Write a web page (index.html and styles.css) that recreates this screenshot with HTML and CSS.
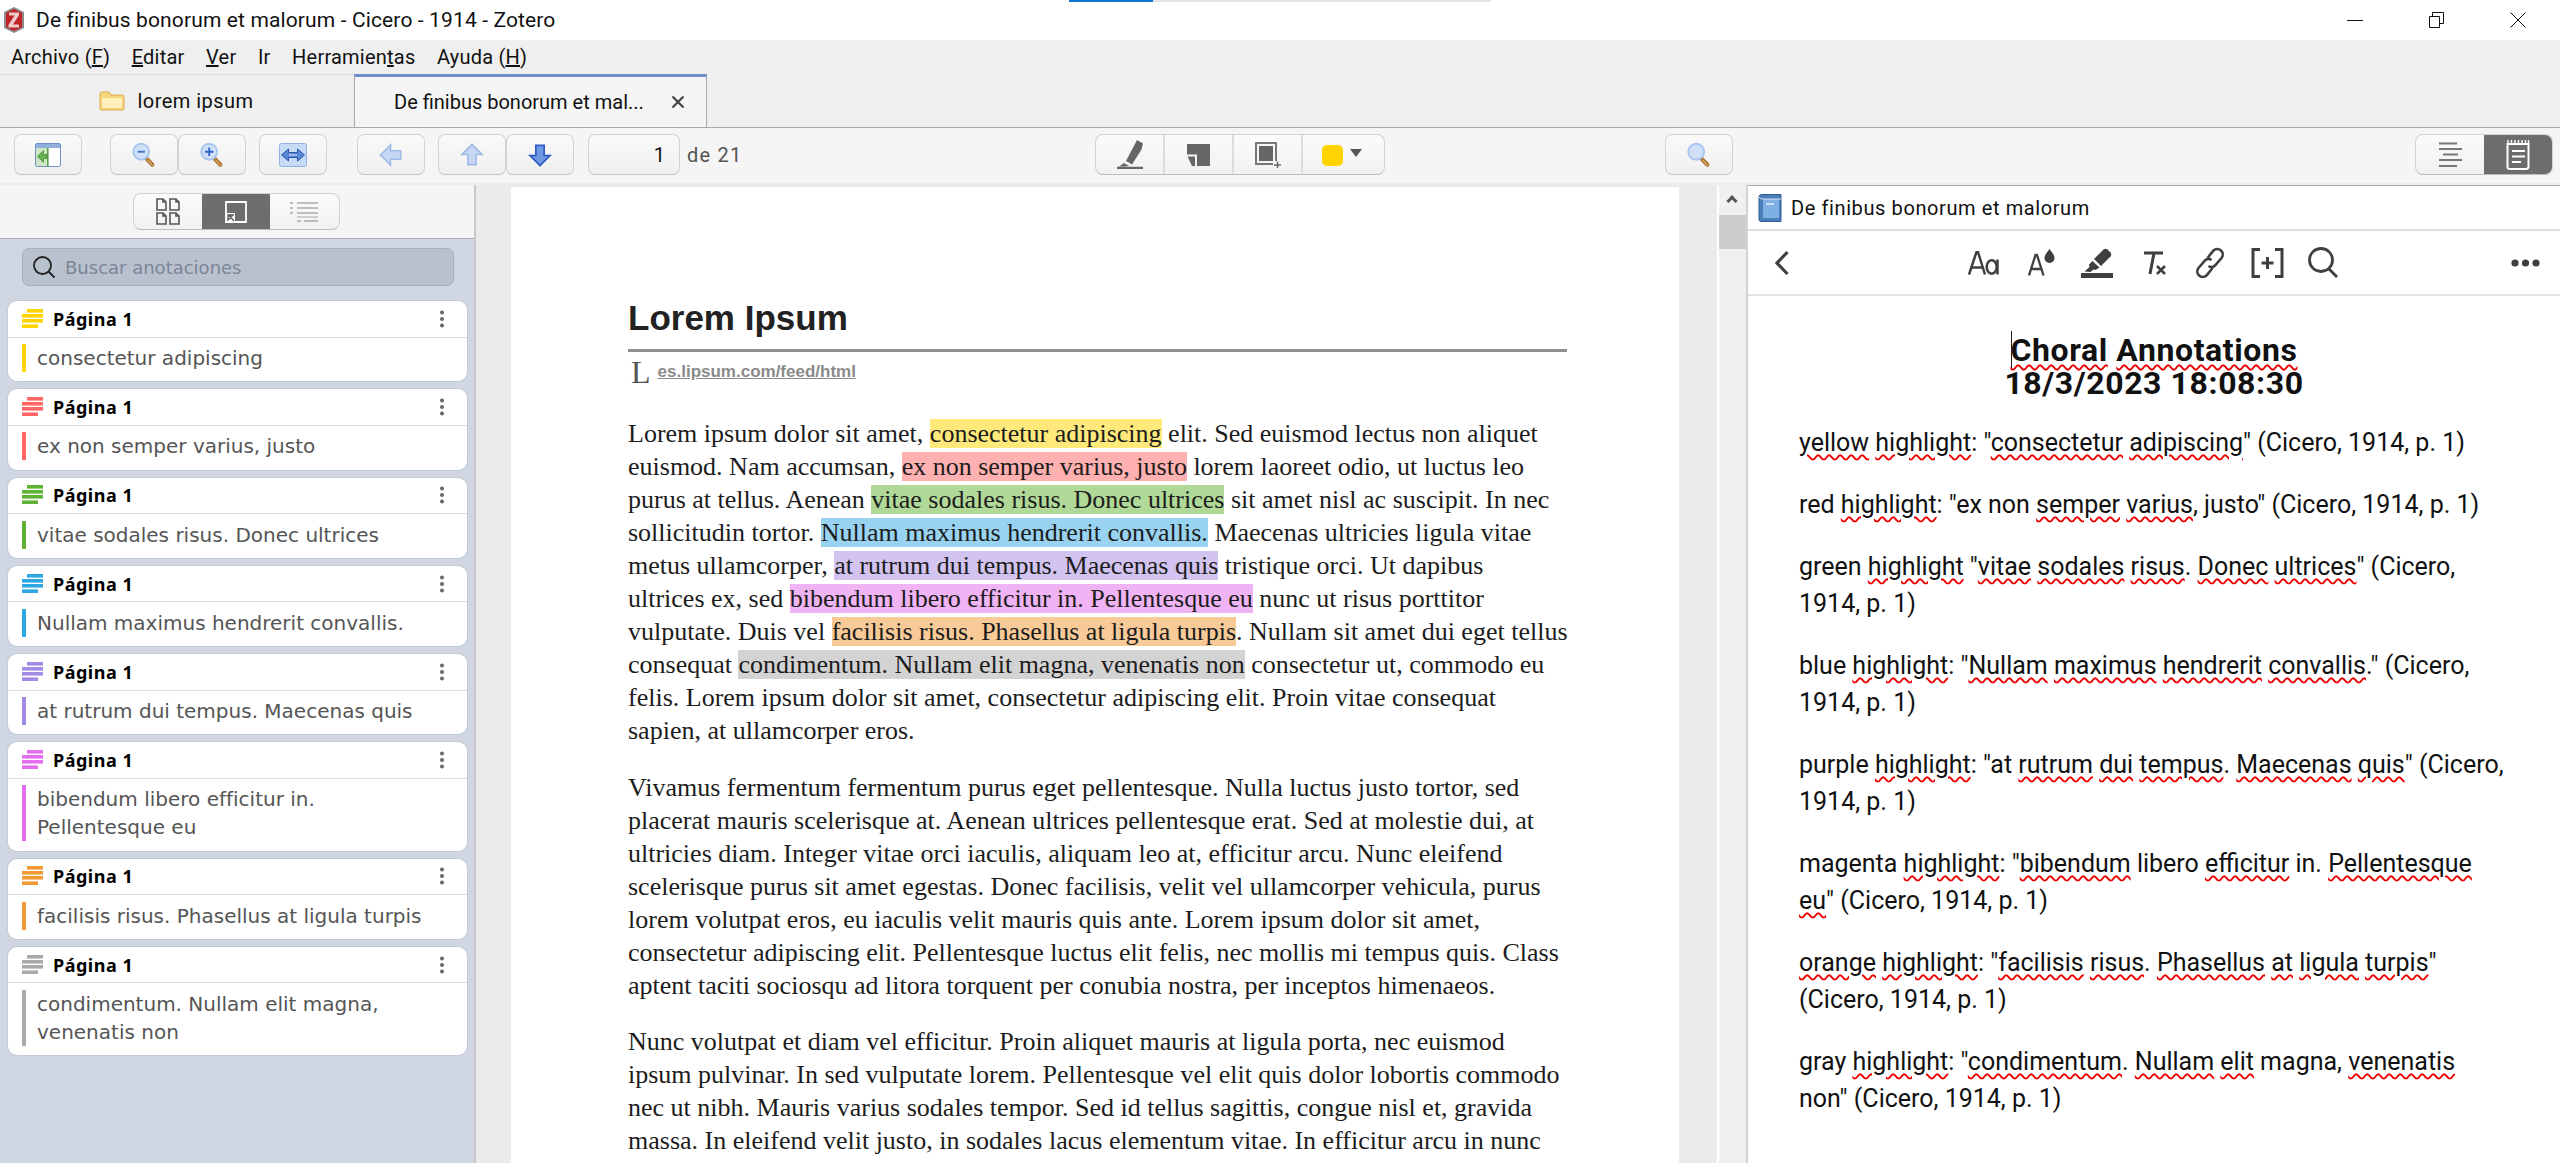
FILE: index.html
```html
<!DOCTYPE html>
<html lang="es">
<head>
<meta charset="utf-8">
<title>De finibus bonorum et malorum - Cicero - 1914 - Zotero</title>
<link rel="stylesheet" href="styles.css">
</head>
<body>
<svg class="sprite" width="0" height="0" aria-hidden="true">
  <symbol id="stripes" viewBox="0 0 21 20">
    <rect x="5" y="0" width="16" height="3.6"/><rect x="0" y="5" width="21" height="3.6"/><rect x="0" y="10" width="21" height="3.6"/><rect x="0" y="15.4" width="16" height="3.6"/>
  </symbol>
  <symbol id="dots" viewBox="0 0 6 18">
    <circle cx="3" cy="2.5" r="2"/><circle cx="3" cy="9" r="2"/><circle cx="3" cy="15.5" r="2"/>
  </symbol>
  <symbol id="mag" viewBox="0 0 28 28">
    <path d="M15.5 16.5l7.5 8" stroke="#a8712f" stroke-width="4.4" stroke-linecap="round" fill="none"/>
    <path d="M18 19.5l5 5.5" stroke="#d9a566" stroke-width="1.6" stroke-linecap="round" fill="none"/>
    <circle cx="11" cy="10.5" r="8.6" fill="#cfe0f8" stroke="#a8c5ee" stroke-width="2"/>
  </symbol>
</svg>

<header class="titlebar">
  <svg class="zlogo" width="22" height="26" viewBox="0 0 22 26"><path d="M11 0l10 5v16l-10 5-10-5V5z" fill="#8a8a8a"/><path d="M11 2l8 4v14l-8 4-8-4V6z" fill="#c02328"/><path d="M6 5.500h10v2.800L10 17.400h6V20.500H5.500v-2.800L11.500 8.500H6z" fill="#f0c9c9"/></svg>
  <span class="wintitle">De finibus bonorum et malorum - Cicero - 1914 - Zotero</span>
  <div class="progress"><span class="progress-fill"></span></div>
  <div class="winctl">
    <svg width="16" height="16" viewBox="0 0 16 16"><path d="M0 8.500h16" stroke="#111" fill="none"/></svg>
    <svg width="15" height="16" viewBox="0 0 15 16"><path d="M.5 4.500h10v11H.5zM3.500 4.500V.5h11v11h-4" stroke="#111" fill="none"/></svg>
    <svg width="16" height="16" viewBox="0 0 16 16"><path d="M.5.500l15 15M15.500.5l-15 15" stroke="#111" fill="none"/></svg>
  </div>
</header>

<nav class="menubar">
  <span>Archivo (<u>F</u>)</span><span><u>E</u>ditar</span><span><u>V</u>er</span><span>Ir</span><span>Herramien<u>t</u>as</span><span>Ayuda (<u>H</u>)</span>
</nav>

<div class="tabs">
  <div class="tab">
    <svg width="26" height="20" viewBox="0 0 26 20"><path d="M1 3q0-2 2-2h7l2 3h11q2 0 2 2v12q0 1-2 1H3q-2 0-2-1z" fill="#f5d67a" stroke="#e1a94c"/><path d="M3 7h20v10H3z" fill="#fdf0bb"/></svg>
    <span class="tab-name">lorem ipsum</span>
  </div>
  <div class="tab tab-active">
    <span>De finibus bonorum et mal...</span>
    <svg class="tab-x" width="14" height="14" viewBox="0 0 14 14"><path d="M1.500 1.500l11 11M12.500 1.500l-11 11" stroke="#444" stroke-width="2.200" fill="none"/></svg>
  </div>
</div>

<div class="toolbar">
  <div class="tb-left">
    <button class="btn" aria-label="Barra lateral"><svg width="26" height="24" viewBox="0 0 26 24"><rect x=".5" y=".5" width="25" height="23" rx="1.5" fill="#fff" stroke="#6f93c8"/><rect x="1" y="1" width="24" height="4" fill="#8fb0de"/><rect x="1" y="5" width="12" height="18" fill="#cfe6c4"/><rect x="12" y="5" width="1.6" height="18" fill="#57a247"/><path d="M2.500 13.500l6-6v4h3.500v4H8.500v4z" fill="#66b152" stroke="#3f8a34" stroke-width=".7"/></svg></button>
    <div class="grp g-zoom">
      <button class="btn" aria-label="Alejar"><svg width="26" height="26" viewBox="0 0 28 28"><use href="#mag" width="28" height="28"/><path d="M7 10.500h8" stroke="#3f72c9" stroke-width="2"/></svg></button>
      <button class="btn" aria-label="Acercar"><svg width="26" height="26" viewBox="0 0 28 28"><use href="#mag" width="28" height="28"/><path d="M6.500 10.500h9M11 6v9" stroke="#2c63c8" stroke-width="2"/></svg></button>
    </div>
    <button class="btn g-fit" aria-label="Ajustar"><svg width="28" height="24" viewBox="0 0 28 24"><rect x=".5" y=".5" width="27" height="23" rx="2" fill="#c6dbf6" stroke="#8eb2e6"/><path d="M2.500 12l7-6v3.500h9V6l7 6-7 6v-3.500h-9V18z" fill="#5a86d4" stroke="#2b53ac" stroke-width="1"/><path d="M10 12h8" stroke="#dbe8fb" stroke-width="1"/></svg></button>
    <button class="btn g-back" aria-label="Atrás"><svg width="24" height="24" viewBox="0 0 26 26"><path d="M1.500 13L12.500 2v6.500h11v9h-11V24z" fill="#c5d7f2" stroke="#9db9e6" stroke-width="1.600"/></svg></button>
    <div class="grp g-page">
      <button class="btn" aria-label="Anterior"><svg width="24" height="24" viewBox="0 0 26 26"><path d="M13 1.500L24 12.500h-6.500v11h-9v-11H2z" fill="#c5d7f2" stroke="#9db9e6" stroke-width="1.600"/></svg></button>
      <button class="btn" aria-label="Siguiente"><svg width="24" height="26" viewBox="0 0 26 26"><path d="M13 24.500L24 13.500h-6.500v-11h-9v11H2z" fill="#6f9ae2" stroke="#2e58c2" stroke-width="1.800"/></svg></button>
    </div>
    <div class="btn pageinput">1</div>
    <span class="pagecount">de 21</span>
  </div>
  <div class="seg seg-annot">
    <button class="cell" aria-label="Resaltar"><svg width="28" height="29" viewBox="0 0 28 29"><path d="M1 28h26" stroke="#666" stroke-width="2.400" fill="none"/><path d="M21 0l6 3.500-1.500 6-9.500 15-6-3.500z" fill="#666"/><path d="M8 23l5 3-4 .5-6 0z" fill="#666"/></svg></button>
    <button class="cell" aria-label="Nota"><svg width="23" height="22" viewBox="0 0 23 22"><path d="M0 0h23v22H10V10.500H0z" fill="#666"/><path d="M.5 12.500H8V22H5z" fill="#666"/></svg></button>
    <button class="cell" aria-label="Imagen"><svg width="26" height="26" viewBox="0 0 26 26"><path d="M1 1h20v21H1z" fill="none" stroke="#777" stroke-width="2"/><rect x="4" y="4" width="14" height="15" fill="#666"/><path d="M18 23h8M22 19v7" stroke="#fff" stroke-width="4"/><path d="M19 23h7M22.500 19.500v6.500" stroke="#666" stroke-width="1.600"/></svg></button>
    <button class="cell cell-color" aria-label="Color"><span class="swatch"></span><span class="caret"></span></button>
  </div>
  <button class="btn g-search" aria-label="Buscar"><svg width="26" height="26" viewBox="0 0 28 28"><use href="#mag" width="28" height="28"/></svg></button>
  <div class="seg seg-view">
    <button class="cell" aria-label="Contenido"><svg width="24" height="26" viewBox="0 0 24 26"><path d="M1 1.500h18M1 7h23M5 12.500h15M1 18h23M1 24h18" stroke="#777" stroke-width="2" fill="none"/></svg></button>
    <button class="cell cell-on" aria-label="Notas"><svg width="24" height="30" viewBox="0 0 24 30"><path d="M1.500 4h21v23q0 2-3 2H4q-2.500 0-2.500-2z" fill="none" stroke="#fff" stroke-width="2"/><path d="M2 0v4M5.500 0v4M9 0v4M12.500 0v4M16 0v4M19.500 0v4M22.500 0v4" stroke="#fff" stroke-width="1.400"/><path d="M6 11h13M6 16.500h13M6 22h9" stroke="#fff" stroke-width="2"/></svg></button>
  </div>
</div>

<main class="main">
  <aside class="sidebar">
    <div class="side-head">
      <div class="seg seg-side">
        <button class="cell" aria-label="Miniaturas"><svg width="24" height="28" viewBox="0 0 24 28"><g fill="none" stroke="#555" stroke-width="1.600"><path d="M1 1h6l3 3v8H1zM14 1h6l3 3v8h-9zM1 15h6l3 3v8H1zM14 15h6l3 3v8h-9z"/><path d="M7 1v3h3M20 1v3h3M7 15v3h3M20 15v3h3"/></g></svg></button>
        <button class="cell cell-on" aria-label="Anotaciones"><svg width="22" height="22" viewBox="0 0 22 22"><path d="M1 1h20v20H1z" fill="none" stroke="#fff" stroke-width="1.800"/><path d="M1 12h9v9H1z" fill="#fff"/><path d="M3 14h5l-5 5zM4 14.500l5 5.500" stroke="#555" stroke-width="1.300" fill="none"/></svg></button>
        <button class="cell" aria-label="Índice"><svg width="28" height="20" viewBox="0 0 28 20"><path d="M0 1h3M7 1h21M0 6h3M7 6h21M0 11h3M7 11h21M7 19h4M14 19h14" stroke="#aaa" stroke-width="1.600" fill="none"/><path d="M7 15h21" stroke="#aaa" stroke-width="1"/></svg></button>
      </div>
    </div>
    <div class="annots">
      <div class="search">
        <svg width="24" height="24" viewBox="0 0 24 24"><circle cx="10.500" cy="10.500" r="8.500" fill="none" stroke="#222" stroke-width="1.800"/><path d="M16.500 16.500l6 6" stroke="#222" stroke-width="1.800"/></svg>
        <span>Buscar anotaciones</span>
      </div>
      <article class="card yellow"><div class="card-head"><svg class="stripes" width="21" height="20"><use href="#stripes"/></svg><b>Página 1</b><svg class="dots" width="6" height="18"><use href="#dots"/></svg></div><div class="card-body"><p>consectetur adipiscing</p></div></article>
      <article class="card red"><div class="card-head"><svg class="stripes" width="21" height="20"><use href="#stripes"/></svg><b>Página 1</b><svg class="dots" width="6" height="18"><use href="#dots"/></svg></div><div class="card-body"><p>ex non semper varius, justo</p></div></article>
      <article class="card green"><div class="card-head"><svg class="stripes" width="21" height="20"><use href="#stripes"/></svg><b>Página 1</b><svg class="dots" width="6" height="18"><use href="#dots"/></svg></div><div class="card-body"><p>vitae sodales risus. Donec ultrices</p></div></article>
      <article class="card blue"><div class="card-head"><svg class="stripes" width="21" height="20"><use href="#stripes"/></svg><b>Página 1</b><svg class="dots" width="6" height="18"><use href="#dots"/></svg></div><div class="card-body"><p>Nullam maximus hendrerit convallis.</p></div></article>
      <article class="card purple"><div class="card-head"><svg class="stripes" width="21" height="20"><use href="#stripes"/></svg><b>Página 1</b><svg class="dots" width="6" height="18"><use href="#dots"/></svg></div><div class="card-body"><p>at rutrum dui tempus. Maecenas quis</p></div></article>
      <article class="card magenta"><div class="card-head"><svg class="stripes" width="21" height="20"><use href="#stripes"/></svg><b>Página 1</b><svg class="dots" width="6" height="18"><use href="#dots"/></svg></div><div class="card-body"><p>bibendum libero efficitur in.<br>Pellentesque eu</p></div></article>
      <article class="card orange"><div class="card-head"><svg class="stripes" width="21" height="20"><use href="#stripes"/></svg><b>Página 1</b><svg class="dots" width="6" height="18"><use href="#dots"/></svg></div><div class="card-body"><p>facilisis risus. Phasellus at ligula turpis</p></div></article>
      <article class="card gray"><div class="card-head"><svg class="stripes" width="21" height="20"><use href="#stripes"/></svg><b>Página 1</b><svg class="dots" width="6" height="18"><use href="#dots"/></svg></div><div class="card-body"><p>condimentum. Nullam elit magna,<br>venenatis non</p></div></article>
    </div>
  </aside>

  <section class="viewer">
    <div class="page">
      <h1>Lorem Ipsum</h1>
      <div class="source"><span class="dropl">L</span><a>es.lipsum.com/feed/html</a></div>
      <p>
        <span class="ln">Lorem ipsum dolor sit amet, <mark class="hl-yellow">consectetur adipiscing</mark> elit. Sed euismod lectus non aliquet</span>
        <span class="ln">euismod. Nam accumsan, <mark class="hl-red">ex non semper varius, justo</mark> lorem laoreet odio, ut luctus leo</span>
        <span class="ln">purus at tellus. Aenean <mark class="hl-green">vitae sodales risus. Donec ultrices</mark> sit amet nisl ac suscipit. In nec</span>
        <span class="ln">sollicitudin tortor. <mark class="hl-blue">Nullam maximus hendrerit convallis.</mark> Maecenas ultricies ligula vitae</span>
        <span class="ln">metus ullamcorper, <mark class="hl-purple">at rutrum dui tempus. Maecenas quis</mark> tristique orci. Ut dapibus</span>
        <span class="ln">ultrices ex, sed <mark class="hl-magenta">bibendum libero efficitur in. Pellentesque eu</mark> nunc ut risus porttitor</span>
        <span class="ln">vulputate. Duis vel <mark class="hl-orange">facilisis risus. Phasellus at ligula turpis</mark>. Nullam sit amet dui eget tellus</span>
        <span class="ln">consequat <mark class="hl-gray">condimentum. Nullam elit magna, venenatis non</mark> consectetur ut, commodo eu</span>
        <span class="ln">felis. Lorem ipsum dolor sit amet, consectetur adipiscing elit. Proin vitae consequat</span>
        <span class="ln">sapien, at ullamcorper eros.</span>
      </p>
      <p>
        <span class="ln">Vivamus fermentum fermentum purus eget pellentesque. Nulla luctus justo tortor, sed</span>
        <span class="ln">placerat mauris scelerisque at. Aenean ultrices pellentesque erat. Sed at molestie dui, at</span>
        <span class="ln">ultricies diam. Integer vitae orci iaculis, aliquam leo at, efficitur arcu. Nunc eleifend</span>
        <span class="ln">scelerisque purus sit amet egestas. Donec facilisis, velit vel ullamcorper vehicula, purus</span>
        <span class="ln">lorem volutpat eros, eu iaculis velit mauris quis ante. Lorem ipsum dolor sit amet,</span>
        <span class="ln">consectetur adipiscing elit. Pellentesque luctus elit felis, nec mollis mi tempus quis. Class</span>
        <span class="ln">aptent taciti sociosqu ad litora torquent per conubia nostra, per inceptos himenaeos.</span>
      </p>
      <p>
        <span class="ln">Nunc volutpat et diam vel efficitur. Proin aliquet mauris at ligula porta, nec euismod</span>
        <span class="ln">ipsum pulvinar. In sed vulputate lorem. Pellentesque vel elit quis dolor lobortis commodo</span>
        <span class="ln">nec ut nibh. Mauris varius sodales tempor. Sed id tellus sagittis, congue nisl et, gravida</span>
        <span class="ln">massa. In eleifend velit justo, in sodales lacus elementum vitae. In efficitur arcu in nunc</span>
      </p>
    </div>
  </section>

  <div class="vscroll"><span class="vs-up"></span><span class="vs-thumb"></span></div>

  <section class="notes">
    <div class="notes-head">
      <svg width="24" height="28" viewBox="0 0 24 28"><path d="M1 3q0-2.500 3-2.500h19v27H3q-2 0-2-2z" fill="#4c7db9" stroke="#2f5d96"/><path d="M5 5h16v19H5z" fill="#7fb0e3"/><path d="M1 3q1 2 4 2h18" stroke="#dbe8f7" fill="none"/><path d="M8 10h8" stroke="#e6f0fb" stroke-width="1.500"/></svg>
      <span>De finibus bonorum et malorum</span>
    </div>
    <div class="notes-tools">
      <svg class="nt-back" width="16" height="26" viewBox="0 0 16 26"><path d="M13.500 2L3 13l10.500 11" fill="none" stroke="#3f3f3f" stroke-width="3.200"/></svg>
      <svg class="nt-aa" width="31" height="24" viewBox="0 0 31 24"><path d="M1 23.500L8.500 1h1.500L17 23.500M4.200 16.500h10.600" fill="none" stroke="#3f3f3f" stroke-width="2.500"/><ellipse cx="23.700" cy="16" rx="5" ry="6.700" fill="none" stroke="#3f3f3f" stroke-width="2.500"/><path d="M29.500 8.500v15" fill="none" stroke="#3f3f3f" stroke-width="2.500"/></svg>
      <svg class="nt-ac" width="27" height="27" viewBox="0 0 27 27"><path d="M1 26.500L7.500 6H9l6.500 20.500M3.500 20h9.500" fill="none" stroke="#3f3f3f" stroke-width="2.300"/><path d="M21.500 0c-2 3-5 5.500-5 9a5 5 0 0 0 10 0c0-3.500-3-6-5-9z" fill="#3f3f3f"/></svg>
      <svg class="nt-hl" width="32" height="30" viewBox="0 0 32 30"><path d="M13 11L22.500 1.500q2-1.500 4 0l3 3q1.500 2 0 4L20 18z" fill="#3f3f3f"/><path d="M11.500 13l7 6.500-4 2.500-2-.5-3 2.500-6-.5 5-4.500-.5-2.500z" fill="#3f3f3f"/><rect x="0" y="25" width="32" height="5" fill="#3f3f3f"/></svg>
      <svg class="nt-tx" width="23" height="24" viewBox="0 0 23 24"><path d="M1 2h19M11 2L7 23" fill="none" stroke="#3f3f3f" stroke-width="3"/><path d="M14 15l8 8M22 15l-8 8" fill="none" stroke="#3f3f3f" stroke-width="2.500"/></svg>
      <svg class="nt-ln" width="32" height="32" viewBox="0 0 32 32"><path d="M13.500 11l6-7.500a5.500 5.500 0 0 1 8 7.500l-6.500 7.500a5 5 0 0 1-6.500.5M18.500 21l-6 7.500a5.500 5.500 0 0 1-8-7.500l6.500-7.500a5 5 0 0 1 6.500-.5" fill="none" stroke="#3f3f3f" stroke-width="2.600"/></svg>
      <svg class="nt-cite" width="33" height="30" viewBox="0 0 33 30"><path d="M9 1.500H2v27h7M24 1.500h7v27h-7" fill="none" stroke="#3f3f3f" stroke-width="3"/><path d="M16.500 9v12M10.500 15h12" stroke="#3f3f3f" stroke-width="3"/></svg>
      <svg class="nt-find" width="32" height="31" viewBox="0 0 32 31"><circle cx="14" cy="13" r="11.500" fill="none" stroke="#3f3f3f" stroke-width="2.800"/><path d="M22 22l8 8" stroke="#3f3f3f" stroke-width="2.800"/></svg>
      <svg class="nt-more" width="29" height="8" viewBox="0 0 29 8"><circle cx="4" cy="4" r="3.600" fill="#3f3f3f"/><circle cx="14.500" cy="4" r="3.600" fill="#3f3f3f"/><circle cx="25" cy="4" r="3.600" fill="#3f3f3f"/></svg>
    </div>
    <div class="notes-doc">
      <h2><span class="caretline"></span><span class="s">Choral</span> <span class="s">Annotations</span><br>18/3/2023 18:08:30</h2>
      <p><span class="s">yellow</span> <span class="s">highlight</span>: "<span class="s">consectetur</span> <span class="s">adipiscing</span>" (Cicero, 1914, p. 1)</p>
      <p>red <span class="s">highlight</span>: "ex non <span class="s">semper</span> <span class="s">varius</span>, justo" (Cicero, 1914, p. 1)</p>
      <p>green <span class="s">highlight</span> "<span class="s">vitae</span> <span class="s">sodales</span> <span class="s">risus</span>. <span class="s">Donec</span> <span class="s">ultrices</span>" (Cicero,<br>1914, p. 1)</p>
      <p>blue <span class="s">highlight</span>: "<span class="s">Nullam</span> <span class="s">maximus</span> <span class="s">hendrerit</span> <span class="s">convallis</span>." (Cicero,<br>1914, p. 1)</p>
      <p>purple <span class="s">highlight</span>: "at <span class="s">rutrum</span> <span class="s">dui</span> <span class="s">tempus</span>. <span class="s">Maecenas</span> <span class="s">quis</span>" (Cicero,<br>1914, p. 1)</p>
      <p>magenta <span class="s">highlight</span>: "<span class="s">bibendum</span> libero <span class="s">efficitur</span> in. <span class="s">Pellentesque</span><br><span class="s">eu</span>" (Cicero, 1914, p. 1)</p>
      <p><span class="s">orange</span> <span class="s">highlight</span>: "<span class="s">facilisis</span> <span class="s">risus</span>. <span class="s">Phasellus</span> <span class="s">at</span> <span class="s">ligula</span> <span class="s">turpis</span>"<br>(Cicero, 1914, p. 1)</p>
      <p>gray <span class="s">highlight</span>: "<span class="s">condimentum</span>. <span class="s">Nullam</span> <span class="s">elit</span> magna, <span class="s">venenatis</span><br>non" (Cicero, 1914, p. 1)</p>
    </div>
  </section>
</main>
</body>
</html>
```

FILE: styles.css
```css
* { box-sizing: border-box; }
html, body { margin: 0; height: 100%; overflow: hidden; }
body {
  display: flex; flex-direction: column;
  height: 1163px;
  font-family: Roboto, "Liberation Sans", sans-serif;
  color: #111;
  background: #fff;
}
.sprite { position: absolute; }
button { font: inherit; padding: 0; background: none; border: 0; }

/* Title bar */
.titlebar { flex: 0 0 40px; display: flex; align-items: center; padding-left: 3px; position: relative; background: #fff; }
.zlogo { flex: none; }
.wintitle { margin-left: 11px; font-size: 21px; letter-spacing: .13px; color: #111; white-space: nowrap; }
.progress { position: absolute; left: 1069px; top: 0; width: 422px; height: 2px; background: #e4e4e4; }
.progress-fill { display: block; width: 84px; height: 2px; background: #0a74d0; }
.winctl { margin-left: auto; display: flex; align-items: center; gap: 66px; padding-right: 34px; }

/* Menu */
.menubar { flex: 0 0 34px; display: flex; align-items: center; gap: 21.500px; padding-left: 11px; background: #efefef; font-size: 20px; letter-spacing: .22px; white-space: nowrap; }

/* Tabs */
.tabs { flex: 0 0 53px; display: flex; background: #efefef; border-bottom: 1px solid #aaa; }
.tab { width: 354px; height: 53px; display: flex; align-items: center; justify-content: center; gap: 13px; font-size: 20px; border-top: 1px solid #ddd; padding-right: 2px; }
.tab svg { flex: none; }
.tab-name { letter-spacing: .45px; }
.tab-active { width: 353px; background: #f5f5f5; border: 1px solid #aaa; border-top: 3px solid #6b8dc8; border-bottom: 0; justify-content: flex-start; padding-left: 39px; }
.tab-x { margin-left: 14px; }

/* Toolbar */
.toolbar { flex: 0 0 57px; display: flex; align-items: center; padding: 0 7px 2px 14px; background: #f5f5f5; border-bottom: 2px solid #ececec; }
.tb-left { width: 1081px; display: flex; align-items: center; }
.btn { width: 68px; height: 41px; display: flex; align-items: center; justify-content: center; background: linear-gradient(#f9f9f9, #f0f0f0); border: 1px solid #d2d2d2; border-bottom-color: #c4c4c4; border-radius: 7px; }
.grp { display: flex; }
.g-zoom { margin-left: 28px; }
.g-fit { margin-left: 13px; }
.g-back { margin-left: 30px; }
.g-page { margin-left: 13px; }
.pageinput { width: 92px; margin-left: 14px; justify-content: flex-end; padding-right: 14px; font-size: 20px; }
.pagecount { margin-left: 7px; font-size: 20px; color: #555; letter-spacing: 1.200px; }
.g-search { margin-left: 280px; }

.seg { display: flex; height: 41px; background: linear-gradient(#fbfbfb, #f1f1f1); border: 1px solid #d2d2d2; border-bottom-color: #bdbdbd; border-radius: 8px; overflow: hidden; }
.cell { width: 69px; display: flex; align-items: center; justify-content: center; border-right: 2px solid #dcdcdc; }
.cell:last-child { border-right: 0; }
.seg-annot { width: 290px; }
.cell-color { flex: 1; gap: 7px; padding-right: 4px; }
.swatch { width: 21px; height: 21px; margin-top: 2px; background: #ffd400; border-radius: 5px; }
.caret { width: 0; height: 0; border-left: 6.500px solid transparent; border-right: 6.500px solid transparent; border-top: 8px solid #555; margin-bottom: 4px; }
.seg-view { margin-left: auto; width: 138px; }
.seg-view .cell { flex: 1; border: 0; }
.cell-on { background: #6d6d6d; }

/* Main */
.main { flex: 1; min-height: 0; display: flex; }
.sidebar { flex: 0 0 476px; display: flex; flex-direction: column; background: #d0d7e2; border-right: 2px solid #c9c9c9; }
.side-head { flex: 0 0 54px; display: flex; justify-content: center; padding-top: 8px; background: #f5f5f5; border-bottom: 1px solid #aab; padding-right: 2px; }
.seg-side { width: 207px; height: 37px; }
.seg-side .cell { flex: 1; border: 0; }
.annots { flex: 1; display: flex; flex-direction: column; gap: 8px; padding: 9px 0 0 8px; overflow: hidden; font-family: "DejaVu Sans", sans-serif; }
.search { width: 432px; height: 38px; margin: 0 0 7px 14px; display: flex; align-items: center; gap: 9px; padding-left: 9px; background: #b9c1cf; border: 1px solid #a5afc2; border-radius: 7px; color: #7c8698; font-size: 18px; }
.card { width: 459px; background: #fff; border-radius: 9px; box-shadow: 0 0 0 1px #c3cad7; flex: none; }
.card-head { height: 36.500px; display: flex; align-items: center; padding: 0 22px 0 14px; border-bottom: 1.500px solid #dcdcdc; }
.card-head b { margin-left: 10px; font-family: "Noto Sans", sans-serif; font-size: 18px; letter-spacing: .5px; color: #000; }
.stripes { fill: currentColor; }
.dots { margin-left: auto; fill: #666; }
.card-body { padding: 6.500px 8px 9.250px 14px; }
.card-body p { margin: 0; padding-left: 11px; border-left: 4px solid currentColor; font-size: 20px; line-height: 28px; -webkit-text-fill-color: #555; }
.yellow { color: #ffd400; } .red { color: #ff6666; } .green { color: #5fb236; } .blue { color: #2ea8e5; }
.purple { color: #a28ae5; } .magenta { color: #e56eee; } .orange { color: #f19837; } .gray { color: #aaaaaa; }

/* PDF viewer */
.viewer { flex: 0 0 1241px; background: #ebebeb; padding: 2px 0 0 35px; overflow: hidden; }
.page { width: 1168px; height: 1000px; background: #fff; padding: 111px 112px 0 117px; font-family: "Liberation Serif", serif; font-size: 26px; color: #1c1c1c; }
.page h1 { margin: 0; height: 54px; border-bottom: 3px solid #909090; font: bold 35px/40px "Liberation Sans", sans-serif; color: #222; }
.source { height: 65px; display: flex; align-items: flex-start; padding-left: 3px; padding-top: 2px; }
.dropl { font-size: 32px; line-height: 36px; color: #555; margin-right: 7px; }
.source a { font: bold 17px/30px "Liberation Sans", sans-serif; color: #8a8a8a; text-decoration: underline; margin-top: 3px; }
.page p { margin: 0 0 23.500px; }
.ln { display: block; line-height: 33px; white-space: nowrap; }
mark { color: inherit; }
.hl-yellow { background: #ffe97a; } .hl-red { background: #ffb0b0; } .hl-green { background: #b0d998; } .hl-blue { background: #98d3f2; }
.hl-purple { background: #d2c3f0; } .hl-magenta { background: #f0b4f5; } .hl-orange { background: #f8ca98; } .hl-gray { background: #d3d3d3; }

/* Scrollbar */
.vscroll { flex: 0 0 29px; background: #f0f0f0; border-left: 2px solid #fff; position: relative; }
.vs-up { position: absolute; left: 9px; top: 12px; width: 8px; height: 8px; border-left: 3px solid #555; border-top: 3px solid #555; transform: rotate(45deg); }
.vs-thumb { position: absolute; left: 0; right: 0; top: 30px; height: 34px; background: #cdcdcd; }

/* Notes */
.notes { flex: 1; min-width: 0; background: #fff; border-left: 2px solid #d2d2d2; }
.notes-head { height: 46px; display: flex; align-items: center; gap: 9px; padding-left: 10px; border-bottom: 2px solid #dedede; border-top: 1px solid #aaa; font-size: 20px; letter-spacing: .6px; color: #111; }
.notes-tools { height: 65px; display: flex; align-items: center; border-bottom: 2px solid #e2e2e2; }
.notes-tools svg { flex: none; }
.nt-back { margin-left: 26px; }
.nt-aa { margin-left: 178px; }
.nt-ac { margin-left: 29px; }
.nt-hl { margin-left: 26px; }
.nt-tx { margin-left: 30px; }
.nt-ln { margin-left: 28px; }
.nt-cite { margin-left: 25px; }
.nt-find { margin-left: 23px; }
.nt-more { margin-left: auto; margin-right: 20px; }
.notes-doc { padding: 38px 0 0 51px; font-size: 25px; line-height: 37px; white-space: nowrap; color: #111; }
.notes-doc h2 { margin: 0 51px 24.500px 0; text-align: center; font-size: 32px; line-height: 32.500px; font-weight: 700; position: relative; letter-spacing: .6px; }
.notes-doc p { margin: 0 0 25px; }
.s { text-decoration: underline wavy #ee0000; text-decoration-thickness: 1.500px; text-underline-offset: 3px; }
.caretline { position: absolute; left: 212px; top: -3px; width: 1px; height: 37px; background: #222; }
```
